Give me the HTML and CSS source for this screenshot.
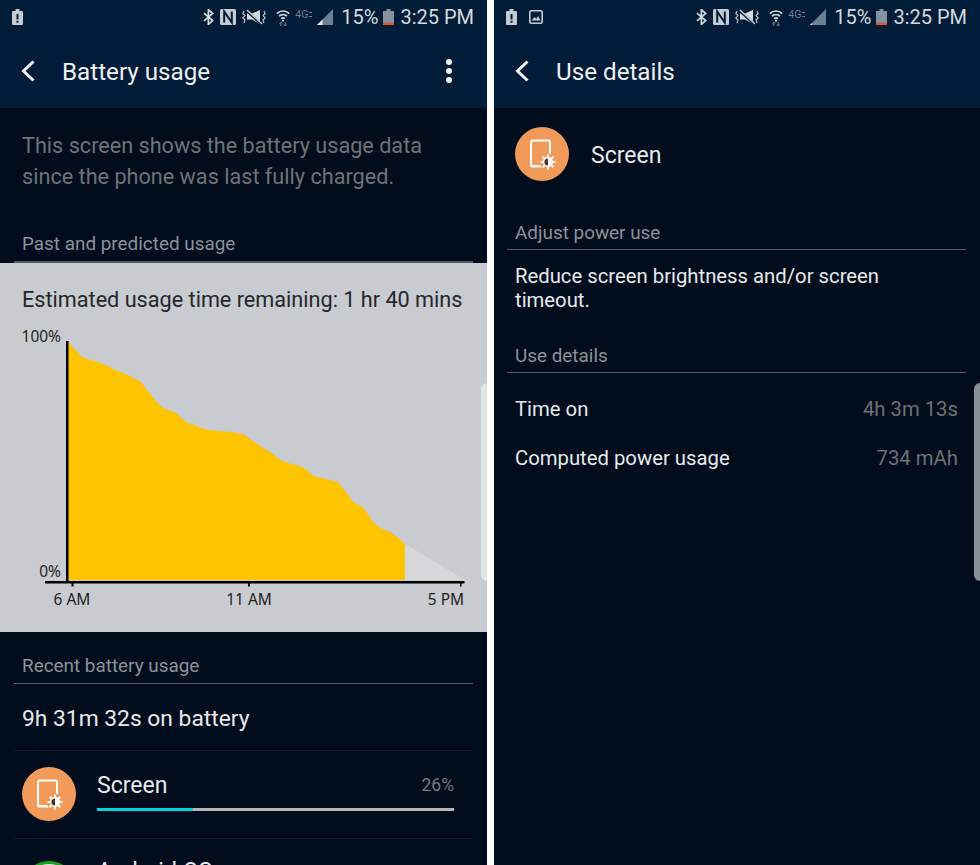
FILE: index.html
```html
<!DOCTYPE html>
<html lang="en">
<head>
  <meta charset="UTF-8">
  <meta name="viewport" content="width=device-width, initial-scale=1.0">
  <title>Battery usage</title>
  <link rel="stylesheet" href="styles.css">
</head>
<body>
  <svg class="sprite" xmlns="http://www.w3.org/2000/svg">
    <symbol id="i-alert" viewBox="0 0 11 16">
      <path d="M3.5 0h4v2H10a1 1 0 0 1 1 1v12a1 1 0 0 1-1 1H1a1 1 0 0 1-1-1V3a1 1 0 0 1 1-1h2.500z" fill="#c6cbd1"/>
      <path d="M4.500 5h2v5.500h-2zM4.500 11.800h2v2h-2z" fill="#011c38"/>
    </symbol>
    <symbol id="i-picture" viewBox="0 0 14 14">
      <rect x="0.8" y="0.8" width="12.4" height="12.4" rx="1.5" fill="none" stroke="#c6cbd1" stroke-width="1.6"/>
      <path d="M2.500 10.500l3-3.500 1.800 2 1.700-3.200 2.500 4.700z" fill="#c6cbd1"/>
    </symbol>
    <symbol id="i-bt" viewBox="0 0 11 16">
      <path d="M1 4.200l8.600 7.400L5.400 15.400V0.600l4.200 3.800L1 11.800" fill="none" stroke="#d5dade" stroke-width="1.7"/>
    </symbol>
    <symbol id="i-nfc" viewBox="0 0 16 16">
      <rect width="16" height="16" rx="1.5" fill="#c6cbd1"/>
      <path d="M4.200 13.500V2.500l7.600 11V2.500" fill="none" stroke="#011c38" stroke-width="2"/>
    </symbol>
    <symbol id="i-mute" viewBox="0 0 24 16">
      <path d="M2 2L0.800 4.500 3 6.500 0.800 9 3 11l-1 3M22 2l1.200 2.500L21 6.500 23.200 9 21 11l1 3" fill="none" stroke="#c6cbd1" stroke-width="1.1"/>
      <path d="M5 4.500h5L18 1v14l-8-4.500H5z" fill="#d5dade"/>
      <path d="M5 2l14 13" stroke="#011c38" stroke-width="2.4"/>
      <path d="M5 1l15 14" stroke="#d5dade" stroke-width="1.2"/>
    </symbol>
    <symbol id="i-wifi" viewBox="0 0 14 17">
      <path d="M0.800 4.600C4.200 1.200 9.800 1.200 13.200 4.600M3 7.200c2.300-2.200 5.700-2.200 8 0M5.200 9.600c1.100-.9 2.500-.9 3.600 0" fill="none" stroke="#d5dade" stroke-width="1.6"/>
      <circle cx="7" cy="11.600" r="1.1" fill="#d5dade"/>
      <path d="M4.800 17v-3.200M3.400 14.600l1.400-1.600 1.400 1.600M9.200 13v3.200M7.800 15.400l1.400 1.600 1.400-1.600" fill="none" stroke="#75869a" stroke-width="1"/>
    </symbol>
    <symbol id="i-signal" viewBox="0 0 16 16">
      <path d="M0 16L16 0v16z" fill="#6d7f92"/>
      <path d="M0 16l5.500-5.500V16z" fill="#e4e8eb"/>
    </symbol>
    <symbol id="i-signal-low" viewBox="0 0 16 16">
      <path d="M0 16L16 0v16z" fill="#6d7f92"/>
      <path d="M0 16l2-2v2z" fill="#e4e8eb"/>
    </symbol>
    <symbol id="i-battery" viewBox="0 0 11 16">
      <path d="M3.500 0h4v2H11v14H0V2h3.500z" fill="#8492a0"/>
      <path d="M0 13.500h11V16H0z" fill="#dc5a32"/>
    </symbol>
    <symbol id="i-back" viewBox="0 0 14 22">
      <path d="M12.500 1.500L2.500 11l10 9.500" fill="none" stroke="#f0f2f4" stroke-width="3"/>
    </symbol>
    <symbol id="i-screen" viewBox="0 0 54 54">
      <circle cx="27" cy="27" r="27" fill="#f19a59"/>
      <path d="M16 36V15a1.500 1.500 0 0 1 1.500-1.500h16A1.500 1.500 0 0 1 35 15v12" fill="none" stroke="#fff" stroke-width="2"/>
      <path d="M15 36h2v2h8l2 2.500H17A2 2 0 0 1 15 38.500z" fill="#fff"/>
      <path d="M33 27.500v15M25.500 35h15M27.700 29.700l10.600 10.600M38.300 29.700L27.700 40.300" stroke="#fff" stroke-width="2"/>
      <circle cx="33" cy="35" r="5" fill="#fff"/>
      <path d="M33 31.400a3.600 3.600 0 0 0 0 7.200z" fill="#4a3424"/>
    </symbol>
  </svg>

  <div class="phone">
    <div class="status">
      <svg class="ic ic-alert"><use href="#i-alert"/></svg>
      <div class="status-right">
        <svg class="ic ic-bt"><use href="#i-bt"/></svg>
        <svg class="ic ic-nfc"><use href="#i-nfc"/></svg>
        <svg class="ic ic-mute"><use href="#i-mute"/></svg>
        <svg class="ic ic-wifi"><use href="#i-wifi"/></svg>
        <span class="net">4G</span>
        <svg class="ic ic-signal"><use href="#i-signal"/></svg>
        <span class="pct">15%</span>
        <svg class="ic ic-battery"><use href="#i-battery"/></svg>
        <span class="clock">3:25 PM</span>
      </div>
    </div>
    <div class="toolbar">
      <svg class="back"><use href="#i-back"/></svg>
      <div class="title">Battery usage</div>
      <div class="more"><span></span><span></span><span></span></div>
    </div>

    <p class="intro">This screen shows the battery usage data<br>since the phone was last fully charged.</p>
    <div class="section section-past">Past and predicted usage</div>

    <div class="card">
      <div class="estimate">Estimated usage time remaining: 1 hr 40 mins</div>
      <svg class="chart" viewBox="0 320 487 290">
        <path class="used" d="M68 342L82 357 87 359 98 362 108 366 113 369 123 373 140 381 155 400 163 408 176 413 187 423 193 424 198 427 208 430 230 432 243 434 247 437 260 446 273 454 280 460 288 463 300 466 307 470 313 476 338 482 343 488 353 502 363 507 373 522 382 529 390 532 397 537 405 544V580H68z"/>
        <path class="predicted" d="M405 544L465 580H405z"/>
        <path class="axis" d="M66 341h2.500v240H464.500v2.500H461.500v3h-1.500v-3H250v3h-2v-3H73.500v3h-2v-3H45V581h21z"/>
        <text class="tick" x="61" y="342" text-anchor="end">100%</text>
        <text class="tick" x="61" y="577" text-anchor="end">0%</text>
        <text class="tick" x="72" y="605" text-anchor="middle">6 AM</text>
        <text class="tick" x="249" y="605" text-anchor="middle">11 AM</text>
        <text class="tick" x="446" y="605" text-anchor="middle">5 PM</text>
      </svg>
    </div>

    <div class="section section-recent">Recent battery usage</div>
    <div class="on-battery">9h 31m 32s on battery</div>
    <div class="usage-row">
      <svg class="app-icon"><use href="#i-screen"/></svg>
      <div class="usage-info">
        <div class="usage-top">
          <span class="usage-name">Screen</span>
          <span class="usage-pct">26%</span>
        </div>
        <div class="bar"><div class="bar-fill" style="width: 27%"></div></div>
      </div>
    </div>
    <div class="usage-row usage-next">
      <div class="android-icon"></div>
      <div class="usage-info">
        <div class="usage-top">
          <span class="usage-name">Android OS</span>
        </div>
      </div>
    </div>
    <div class="handle"></div>
  </div>

  <div class="phone phone-right">
    <div class="status">
      <svg class="ic ic-alert"><use href="#i-alert"/></svg>
      <svg class="ic ic-picture"><use href="#i-picture"/></svg>
      <div class="status-right">
        <svg class="ic ic-bt"><use href="#i-bt"/></svg>
        <svg class="ic ic-nfc"><use href="#i-nfc"/></svg>
        <svg class="ic ic-mute"><use href="#i-mute"/></svg>
        <svg class="ic ic-wifi"><use href="#i-wifi"/></svg>
        <span class="net">4G</span>
        <svg class="ic ic-signal"><use href="#i-signal-low"/></svg>
        <span class="pct">15%</span>
        <svg class="ic ic-battery"><use href="#i-battery"/></svg>
        <span class="clock">3:25 PM</span>
      </div>
    </div>
    <div class="toolbar">
      <svg class="back"><use href="#i-back"/></svg>
      <div class="title">Use details</div>
    </div>

    <div class="app-head">
      <svg class="app-icon"><use href="#i-screen"/></svg>
      <span class="app-name">Screen</span>
    </div>

    <div class="section section-adjust">Adjust power use</div>
    <p class="advice">Reduce screen brightness and/or screen<br>timeout.</p>
    <div class="section section-details">Use details</div>
    <div class="details">
      <div class="detail-row"><span>Time on</span><span class="detail-value">4h 3m 13s</span></div>
      <div class="detail-row"><span>Computed power usage</span><span class="detail-value">734 mAh</span></div>
    </div>
    <div class="handle handle-dark"></div>
  </div>
</body>
</html>
```

FILE: styles.css
```css
body {
  margin: 0;
  height: 865px;
  overflow: hidden;
  display: flex;
  background: #fff;
  font-family: Roboto, "Liberation Sans", sans-serif;
}

.sprite {
  display: none;
}

.phone {
  position: relative;
  width: 487px;
  height: 865px;
  overflow: hidden;
  flex-shrink: 0;
  background: #010c1d;
}

.phone-right {
  width: 486px;
  margin-left: 7px;
}

/* status bar */
.status {
  height: 34px;
  display: flex;
  align-items: center;
  padding: 0 13px 0 12px;
  background: #011c38;
  color: #d5dade;
}

.status-right {
  margin-left: auto;
  display: flex;
  align-items: center;
}

.ic {
  display: block;
  flex-shrink: 0;
}

.ic-alert { width: 11px; height: 16px; }
.ic-picture { width: 14px; height: 14px; margin-left: 12px; }
.ic-bt { width: 11px; height: 16px; }
.ic-nfc { width: 16px; height: 16px; margin-left: 6px; }
.ic-mute { width: 24px; height: 16px; margin-left: 6px; }
.ic-wifi { width: 14px; height: 17px; margin-left: 10px; }
.ic-signal { width: 16px; height: 16px; margin-left: 5px; }
.ic-battery { width: 11px; height: 16px; margin-left: 5px; }

.net {
  width: 17px;
  margin-left: 5px;
  margin-top: -6px;
  display: flex;
  align-items: center;
  white-space: nowrap;
  font-size: 10.5px;
  color: #6d7f92;
}

.net::after {
  content: "";
  width: 3px;
  height: 3px;
  margin-left: 1px;
  border-top: 1px solid #6d7f92;
  border-bottom: 1px solid #6d7f92;
}

.pct {
  margin-left: 8px;
  font-size: 20px;
}

.clock {
  margin-left: 6px;
  font-size: 20px;
}

/* toolbar */
.toolbar {
  height: 74px;
  box-sizing: border-box;
  display: flex;
  align-items: center;
  padding: 2px 35px 0 21px;
  background: #011c38;
  color: #f0f2f4;
}

.back {
  width: 14px;
  height: 22px;
  margin-top: -3px;
}

.title {
  margin-left: 27px;
  font-size: 24.2px;
}

.more {
  margin-left: auto;
  display: flex;
  flex-direction: column;
  gap: 3px;
  margin-top: -2px;
}

.more span {
  width: 6px;
  height: 6px;
  border-radius: 50%;
  background: #f0f2f4;
}

/* shared */
.section {
  margin: 0 14px;
  padding: 0 8px 5px;
  line-height: 24px;
  font-size: 18.9px;
  color: #8d9298;
  border-bottom: 1px solid #555a64;
}

.intro {
  margin: 0;
  padding: 22px 22px 0;
  line-height: 31px;
  font-size: 21.65px;
  color: #6f7378;
}

.section-past {
  margin-top: 40px;
  border-bottom-width: 2px;
}

.card {
  padding: 24px 0 22px;
  background: #c8cbcf;
}

.estimate {
  padding-left: 22px;
  line-height: 26px;
  font-size: 21.65px;
  color: #24272b;
}

.chart {
  display: block;
  width: 487px;
  height: 290px;
  margin-top: 7px;
}

.used { fill: #ffc400; }
.predicted { fill: #d6d7d8; }
.axis { fill: #000; }

.tick {
  font-family: "Noto Sans", sans-serif;
  font-size: 15.5px;
  fill: #1d1f22;
}

.section-recent {
  margin-top: 22px;
}

.on-battery {
  height: 67px;
  box-sizing: border-box;
  margin: 0 14px;
  padding: 2px 0 0 8px;
  display: flex;
  align-items: center;
  font-size: 22.8px;
  color: #e8eaec;
  border-bottom: 1px solid #0c1a2e;
}

.usage-row {
  height: 88px;
  margin: 0 14px;
  padding: 16px 19px 0 8px;
  box-sizing: border-box;
  display: flex;
  gap: 21px;
  border-bottom: 1px solid #0c1a2e;
}

.app-icon {
  display: block;
  width: 54px;
  height: 54px;
  flex-shrink: 0;
}

.usage-info {
  flex: 1;
  padding-top: 6px;
}

.usage-top {
  display: flex;
  justify-content: space-between;
  line-height: 26px;
}

.usage-name {
  font-size: 23px;
  color: #e8eaec;
}

.usage-pct {
  margin-top: -1px;
  font-size: 17.5px;
  color: #77797c;
}

.bar {
  height: 3px;
  margin-top: 9px;
  background: #b5b6b6;
}

.bar-fill {
  height: 100%;
  background: #00d2e0;
}

.usage-next {
  height: 120px;
  padding-top: 22px;
  border-bottom: 0;
}

.usage-next .usage-info {
  padding-top: 0;
  margin-top: -2px;
}

.android-icon {
  width: 54px;
  height: 54px;
  flex-shrink: 0;
  box-sizing: border-box;
  border-radius: 50%;
  background: #dfe7df;
  border: 3px solid #19a11f;
}

.handle {
  position: absolute;
  right: 0;
  top: 383px;
  width: 6px;
  height: 198px;
  border-radius: 6px 0 0 6px;
  background: #e3e4e8;
}

.handle-dark {
  background: #8a9097;
}

/* use details */
.app-head {
  padding: 19px 0 0 21px;
  display: flex;
  align-items: center;
  gap: 22px;
}

.app-name {
  padding-top: 2px;
  font-size: 23px;
  color: #e8eaec;
}

.section-adjust,
.section-details {
  margin-left: 13px;
  padding-bottom: 4px;
}

.section-adjust {
  margin-top: 40px;
}

.advice {
  margin: 0;
  padding: 14px 21px 32px;
  line-height: 24px;
  font-size: 20.3px;
  color: #e8eaec;
}

.details {
  padding: 11px 22px 0 21px;
}

.detail-row {
  height: 49px;
  display: flex;
  align-items: center;
  justify-content: space-between;
  font-size: 20.3px;
  color: #e8eaec;
}

.detail-value {
  color: #6f7174;
}
```
